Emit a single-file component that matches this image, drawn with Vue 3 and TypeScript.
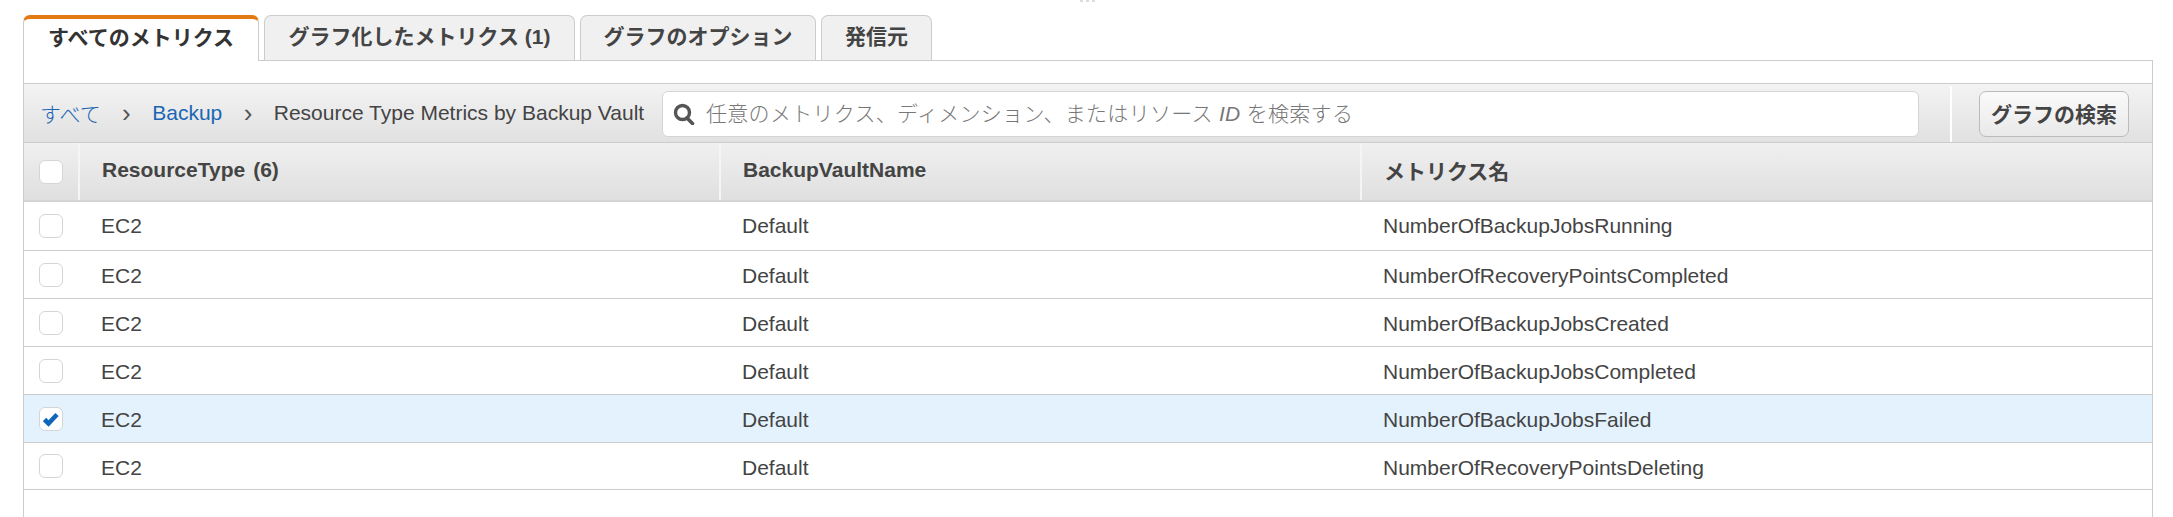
<script setup lang="ts">
const tabs = [
  { label: 'すべてのメトリクス', width: 236 },
  { label: 'グラフ化したメトリクス (1)', width: 311 },
  { label: 'グラフのオプション', width: 236 },
  { label: '発信元', width: 111 },
];

const metrics = [
  { name: 'NumberOfBackupJobsRunning', checked: false },
  { name: 'NumberOfRecoveryPointsCompleted', checked: false },
  { name: 'NumberOfBackupJobsCreated', checked: false },
  { name: 'NumberOfBackupJobsCompleted', checked: false },
  { name: 'NumberOfBackupJobsFailed', checked: true },
  { name: 'NumberOfRecoveryPointsDeleting', checked: false },
];
</script>

<template>
  <div class="page">
    <!-- poignée tout en haut, coupée par le bord -->
    <div class="handle"><i></i><i></i><i></i></div>

    <div class="tabs">
      <div
        v-for="(tab, index) in tabs"
        :key="tab.label"
        class="tab"
        :class="{ active: index === 0 }"
        :style="{ width: tab.width + 'px' }"
      >
        {{ tab.label }}
      </div>
    </div>

    <div class="panel">
      <div class="toolbar">
        <div class="crumbs">
          <a class="link">すべて</a>
          <span class="sep">›</span>
          <a class="link">Backup</a>
          <span class="sep">›</span>
          <span>Resource Type Metrics by Backup Vault</span>
        </div>
        <div class="search">
          <svg class="search-icon" viewBox="0 0 22 22" width="22" height="22">
            <circle cx="9.5" cy="9.5" r="7" fill="none" stroke="#555" stroke-width="3.4" />
            <path d="M14 15 L19.5 20.5" stroke="#555" stroke-width="3.6" stroke-linecap="round" />
          </svg>
          <span class="placeholder">任意のメトリクス、ディメンション、またはリソース <i>ID</i> を検索する</span>
        </div>
        <div class="actions">
          <button class="graph-btn">グラフの検索</button>
        </div>
      </div>

      <div class="grid head">
        <div class="cell check-cell"><span class="box"></span></div>
        <div class="cell">ResourceType<span class="count">(6)</span></div>
        <div class="cell">BackupVaultName</div>
        <div class="cell">メトリクス名</div>
      </div>

      <div
        v-for="metric in metrics"
        :key="metric.name"
        class="grid row"
        :class="{ selected: metric.checked }"
      >
        <div class="cell check-cell">
          <span class="box">
            <svg v-if="metric.checked" viewBox="0 0 24 24" width="24" height="24">
              <path d="M5.5 12.5 L9.5 16.5 L18 7.5" fill="none" stroke="#1166bb" stroke-width="4.6" />
            </svg>
          </span>
        </div>
        <div class="cell">EC2</div>
        <div class="cell">Default</div>
        <div class="cell">{{ metric.name }}</div>
      </div>
    </div>
  </div>
</template>

<style>
html,
body {
  margin: 0;
  background: #fff;
}
</style>

<style scoped>
.page {
  position: relative;
  height: 517px;
  overflow: hidden;
  padding: 15px 20px 0 23px;
  box-sizing: border-box;
  font-family: "Liberation Sans", "Noto Sans CJK JP", sans-serif;
  font-size: 21px;
  color: #444;
}

.handle {
  position: absolute;
  top: 0;
  left: 1080px;
  display: flex;
  gap: 3px;
}

.handle i {
  width: 3px;
  height: 2px;
  background: #ddd;
}

.tabs {
  display: flex;
  gap: 5px;
  height: 45px;
}

.tab {
  box-sizing: border-box;
  height: 45px;
  border: 1px solid #ccc;
  border-bottom: none;
  border-radius: 7px 7px 0 0;
  background: #f0f0f0;
  font-weight: 700;
  text-align: center;
  line-height: 42px;
  color: #444;
}

.tab.active {
  position: relative;
  z-index: 1;
  height: 46px;
  background: #fff;
  border-top: 4px solid #e47911;
  line-height: 38px;
  color: #333;
}

.panel {
  box-sizing: border-box;
  height: 457px;
  border: 1px solid #ccc;
  border-bottom: none;
  padding-top: 22px;
}

.toolbar {
  display: flex;
  align-items: stretch;
  height: 60px;
  box-sizing: border-box;
  border-top: 1px solid #ccc;
  border-bottom: 1px solid #ccc;
  background: linear-gradient(#f3f3f3, #e1e1e1);
}

.crumbs {
  display: flex;
  align-items: center;
  width: 638px;
  padding-left: 16px;
  box-sizing: border-box;
  white-space: nowrap;
}

.link {
  color: #1a66b5;
}

.link:first-child {
  font-weight: 300;
}

.sep {
  width: 51.5px;
  text-align: center;
  font-size: 26px;
  line-height: 1;
  color: #555;
}

.search {
  display: flex;
  align-items: center;
  gap: 11px;
  flex: none;
  width: 1257px;
  height: 46px;
  margin-top: 7px;
  padding-left: 10px;
  box-sizing: border-box;
  background: #fff;
  border: 1px solid #d5d5d5;
  border-radius: 6px;
}

.search-icon {
  flex: none;
}

.placeholder {
  margin-top: -4px;
  color: #777;
  font-weight: 300;
  letter-spacing: 0.3px;
  white-space: nowrap;
}

.actions {
  flex: 1;
  margin-left: 31px;
  padding-left: 27px;
  border-left: 2px solid #fff;
  margin-top: 2px;
}

.graph-btn {
  display: block;
  width: 150px;
  height: 46px;
  margin-top: 5px;
  padding: 0 0 2px;
  font: inherit;
  font-weight: 700;
  color: #444;
  background: linear-gradient(#fafafa, #e9e9e9);
  border: 1px solid #bbb;
  border-radius: 7px;
}

.grid {
  display: grid;
  grid-template-columns: 54px 641px 641px 1fr;
  box-sizing: border-box;
}

.cell {
  display: flex;
  align-items: center;
  padding-left: 23px;
  white-space: nowrap;
}

.check-cell {
  padding-left: 15px;
}

.head {
  height: 59px;
  background: linear-gradient(#f0f0f0, #dfdfdf);
  border-bottom: 2px solid #d5d5d5;
  font-weight: 700;
}

.head .cell:not(:first-child) {
  border-left: 2px solid #f5f5f5;
  padding-left: 22px;
  padding-bottom: 4px;
}

.count {
  margin-left: 8px;
}

.row {
  height: 48px;
  border-bottom: 1px solid #ccc;
}

.row .cell:not(.check-cell) {
  padding-top: 2px;
}

.head + .row {
  height: 49px;
}

.head + .row .cell:not(.check-cell) {
  padding-top: 0;
}

.row:last-child {
  height: 47px;
}

.row:last-child .cell:not(.check-cell) {
  padding-top: 4px;
}

.selected {
  background: #e3f2fd;
}

.box {
  display: block;
  box-sizing: border-box;
  width: 24px;
  height: 24px;
  background: #fff;
  border: 1px solid #d5d5d5;
  border-radius: 6px;
}

.box svg {
  display: block;
  margin: -1px;
}
</style>
